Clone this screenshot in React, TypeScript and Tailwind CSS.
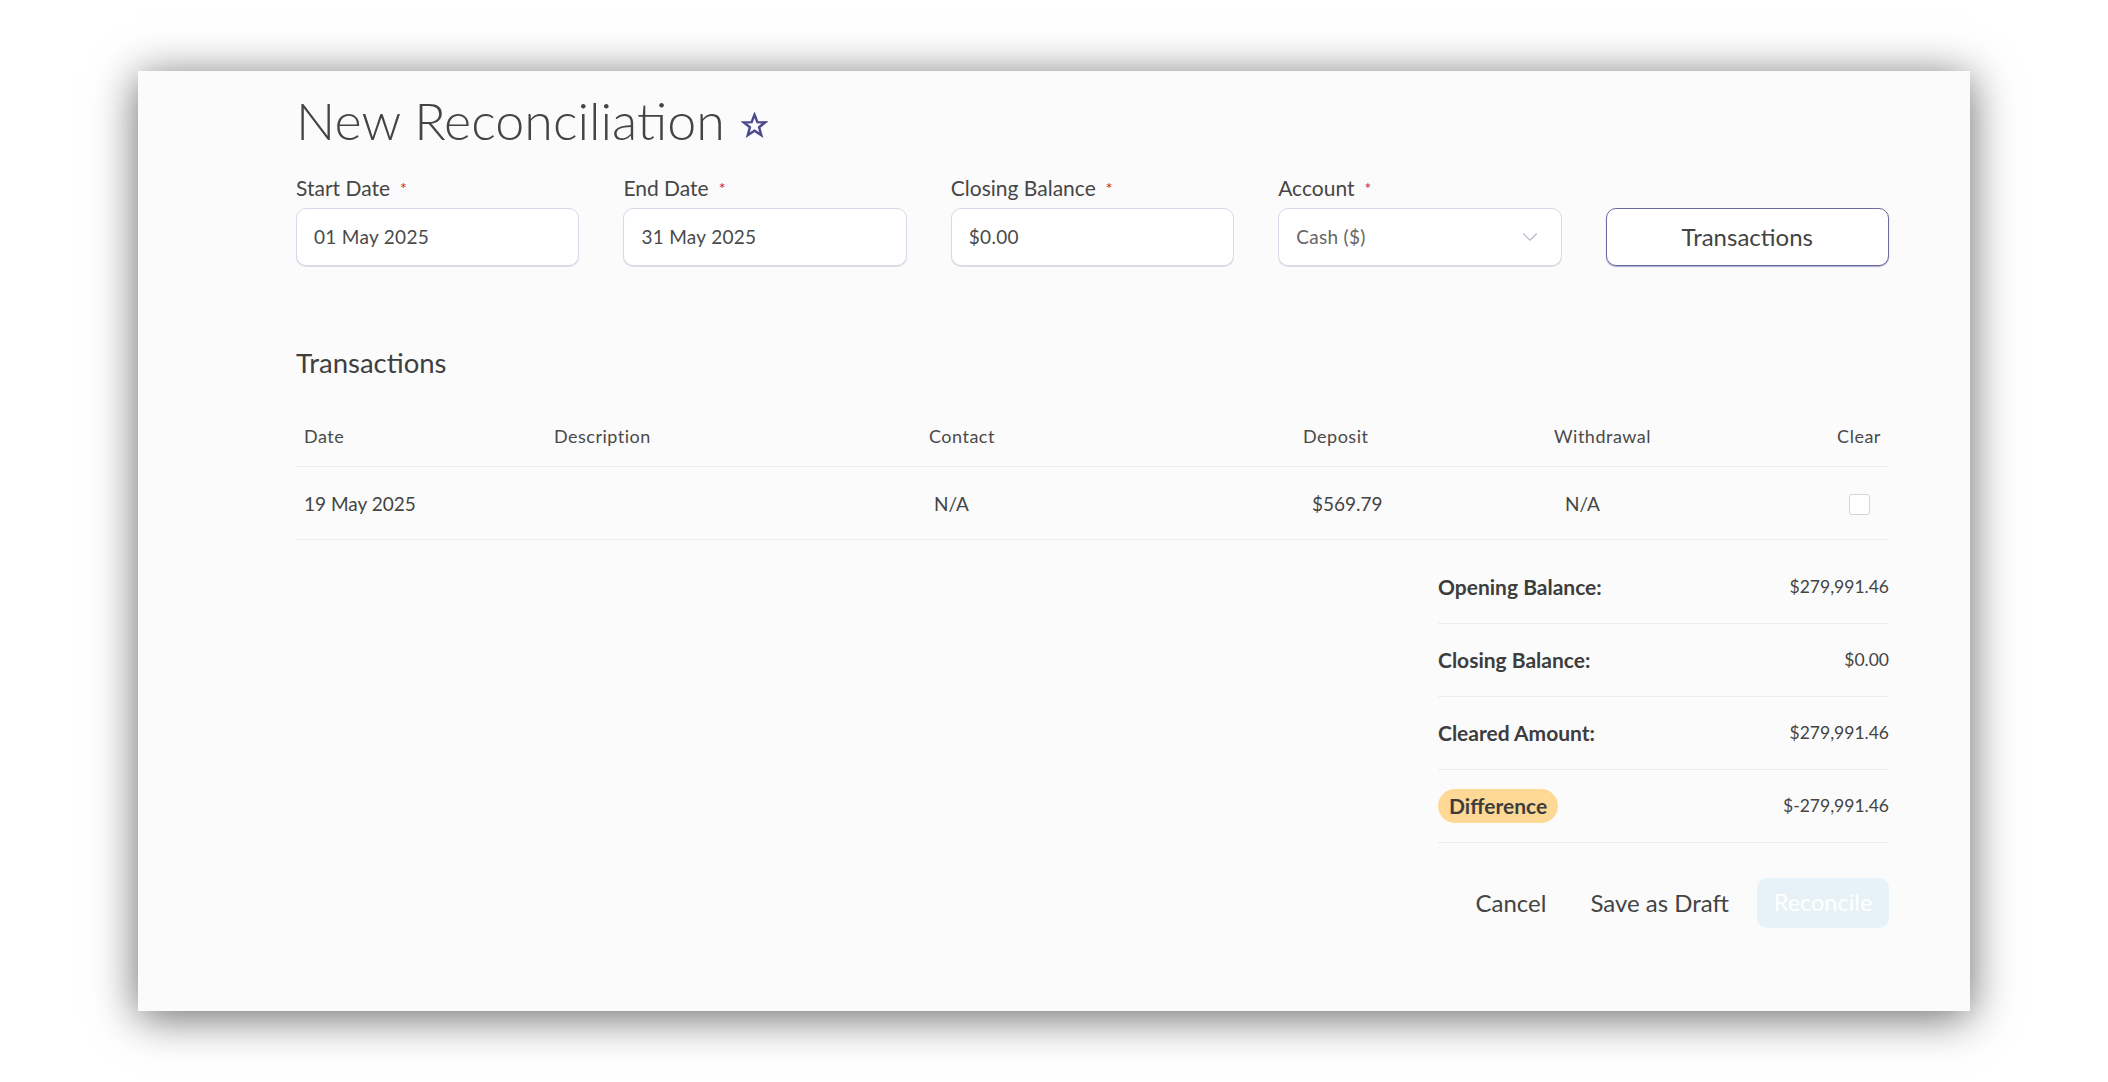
import { ChevronDown } from 'lucide-react';

const font = { fontFamily: 'Lato, "Noto Sans", sans-serif' };

function Field({ label, value, select }: { label: string; value: string; select?: boolean }) {
  return (
    <div className="flex flex-col">
      <label className="flex h-[24px] items-center text-[21px] leading-[24px] text-[#464646]">
        {label}
        <span className="ml-[10px] text-[16px] text-[#d11a1a]">*</span>
      </label>
      <div className="mt-[8px] flex h-[58px] items-center justify-between rounded-[10px] border border-[#d9d9e8] bg-white pl-[17px] pr-[18px] text-[19px] tracking-[0.3px] text-[#4a4a4a] shadow-[0_1px_0_rgba(200,200,220,0.6)]">
        <span className={select ? 'text-[#666]' : ''}>{value}</span>
        {select && <ChevronDown className="size-[26px] text-[#b8b8c4]" strokeWidth={1} />}
      </div>
    </div>
  );
}

function SummaryRow({ label, value, badge }: { label: string; value: string; badge?: boolean }) {
  return (
    <div className="flex h-[73px] items-center justify-between border-b border-[#ececef]">
      {badge ? (
        <span className="flex h-[34px] items-center rounded-full bg-[#fdd995] px-[11px] text-[21px] font-bold text-[#3d3d3d]">
          {label}
        </span>
      ) : (
        <span className="text-[21px] font-bold text-[#3d3d3d]">{label}</span>
      )}
      <span className="text-[17.5px] text-[#444]">{value}</span>
    </div>
  );
}

export default function App() {
  return (
    <div className="min-h-screen bg-white pl-[138px] pt-[71px]" style={font}>
      <div className="h-[940px] w-[1832px] bg-[#fbfbfb] pl-[158px] pr-[81px] pt-[22px] shadow-[0_6px_42px_rgba(0,0,0,0.6)]">
        <div className="flex items-center gap-[16px]">
          <h1 className="text-[52px] font-light leading-[54px] text-[#444]">New Reconciliation</h1>
          <svg width="27" height="27" viewBox="0 0 24 24" className="mt-[10px]">
            <polygon
              points="12,2.5 14.6,9 21.5,9.3 16.1,13.6 18,20.5 12,16.6 6,20.5 7.9,13.6 2.5,9.3 9.4,9"
              fill="none"
              stroke="#4b4a8c"
              strokeWidth="2.2"
              strokeLinejoin="miter"
            />
          </svg>
        </div>

        <div className="mt-[29px] grid grid-cols-5 gap-[44px]">
          <Field label="Start Date" value="01 May 2025" />
          <Field label="End Date" value="31 May 2025" />
          <Field label="Closing Balance" value="$0.00" />
          <Field label="Account" value="Cash ($)" select />
          <div className="flex flex-col justify-end">
            <button className="h-[58px] rounded-[10px] border border-[#6b6ba3] bg-white text-[24px] text-[#444] shadow-[0_1px_1px_rgba(90,90,150,0.5)]">
              Transactions
            </button>
          </div>
        </div>

        <h2 className="mt-[81px] text-[27.5px] leading-[32px] text-[#3f3f3f]">Transactions</h2>

        <div className="mt-[28px]">
          <div className="grid h-[60px] grid-cols-[258px_375px_374px_251px_1fr_60px] items-center border-b border-[#ececef] text-[18px] tracking-[0.5px] text-[#4a4a4a]">
            <div className="pl-2">Date</div>
            <div>Description</div>
            <div>Contact</div>
            <div>Deposit</div>
            <div>Withdrawal</div>
            <div className="text-center">Clear</div>
          </div>
          <div className="grid h-[73px] grid-cols-[258px_375px_374px_251px_1fr_60px] items-center border-b border-[#ececef] pt-[2px] text-[19px] text-[#444]">
            <div className="pl-2">19 May 2025</div>
            <div></div>
            <div className="pl-[5px]">N/A</div>
            <div className="pl-[9px]">$569.79</div>
            <div className="pl-[11px]">N/A</div>
            <div className="flex justify-center">
              <span className="block size-[21px] rounded-[3px] border border-[#d4d4dc] bg-white"></span>
            </div>
          </div>
        </div>

        <div className="ml-auto mt-[11px] w-[451px]">
          <SummaryRow label="Opening Balance:" value="$279,991.46" />
          <SummaryRow label="Closing Balance:" value="$0.00" />
          <SummaryRow label="Cleared Amount:" value="$279,991.46" />
          <SummaryRow label="Difference" value="$-279,991.46" badge />

          <div className="mt-[35px] flex items-center justify-end">
            <button className="mr-[44px] text-[24px] text-[#444]">Cancel</button>
            <button className="mr-[28px] text-[24px] text-[#444]">Save as Draft</button>
            <button className="h-[50px] w-[132px] rounded-[10px] bg-[#e6f2f7] text-[23.5px] text-white">Reconcile</button>
          </div>
        </div>
      </div>
    </div>
  );
}
